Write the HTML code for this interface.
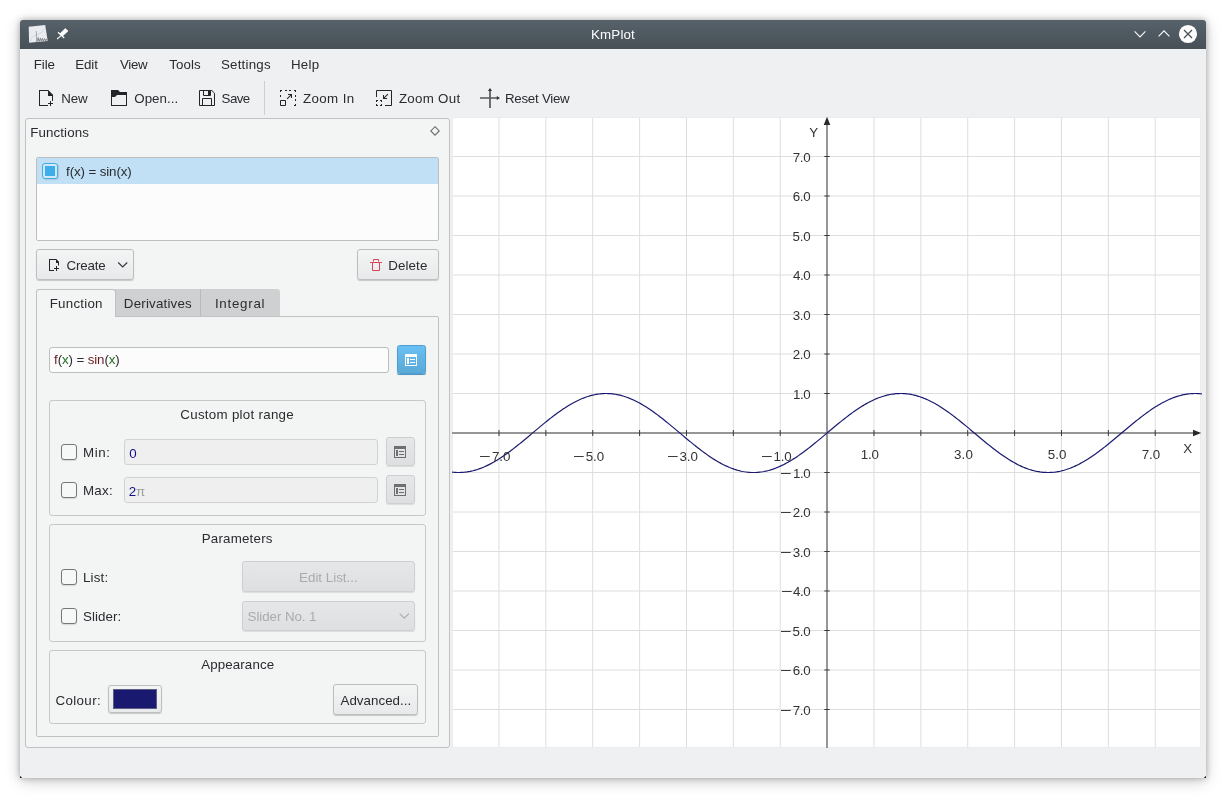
<!DOCTYPE html>
<html lang="en">
<head>
<meta charset="utf-8">
<title>KmPlot</title>
<style>
html,body{margin:0;padding:0;background:#fff;}
body{position:relative;width:1226px;height:798px;overflow:hidden;font-family:"Liberation Sans",sans-serif;font-size:13.33px;color:#31363b;}
div,span,svg{position:absolute;box-sizing:border-box;}
.t{line-height:16px;white-space:pre;font-size:13.33px;}
.t b{font-weight:normal;}
.t .r{color:#6b1a22;}
.t .g{color:#1c6e1c;}
.t .mn{font-style:normal;display:inline-block;position:absolute;right:100%;top:0;margin-right:0.8px;transform:scaleX(1.5);transform-origin:100% 50%;letter-spacing:0;}
.win{left:20px;top:20px;width:1186px;height:758px;background:#eff0f1;border-radius:3px 3px 0 0;box-shadow:0 0 6px rgba(0,0,0,.28),0 3px 16px rgba(0,0,0,.2);}
.title{left:20px;top:20px;width:1186px;height:29px;border-radius:3px 3px 0 0;background:linear-gradient(#566169,#475057);}
.sep{left:264px;top:81px;width:1px;height:34px;background:#cdd0d2;}
.dock{left:25px;top:118px;width:425px;height:630px;border:1px solid #bfc1c3;border-radius:3px;background:#f3f4f4;}
.list{left:36px;top:157px;width:403px;height:84px;border:1px solid #bcbec0;border-radius:2px;background:#fcfcfc;}
.sel{left:37px;top:158px;width:401px;height:26px;background:#c2e0f5;}
.cbon{left:42px;top:163px;width:16px;height:16px;border:1px solid #3daee9;border-radius:3px;background:#d4e8f7;box-shadow:1px 1px 1px rgba(0,0,0,.12);}
.cbon i{position:absolute;left:2px;top:2px;width:10px;height:10px;background:#3daee9;}
.btn{border:1px solid #bcbec0;border-radius:3px;background:linear-gradient(#f3f4f4,#e8e9ea);box-shadow:0 1px 1px rgba(0,0,0,.18);}
.btn.dis{border-color:#cdcfd0;background:linear-gradient(#e6e7e8,#dedfe0);box-shadow:0 1px 1px rgba(0,0,0,.10);}
.btn.blue{border-color:#4d9fd1;border-radius:2.5px;background:linear-gradient(#68c0f2,#5aa9d7);box-shadow:0 1px 0 #4f98c6,0 1px 1px rgba(0,0,0,.2);}
.tabs{left:115px;top:289px;width:165px;height:28px;background:#cfd0d1;border-radius:0 3px 0 0;}
.tabdiv{left:200px;top:289px;width:1px;height:27px;background:#b9babb;}
.pane{left:36px;top:316px;width:403px;height:421px;border:1px solid #bfc1c3;border-radius:0 2px 2px 2px;}
.tabact{left:36px;top:289px;width:80px;height:28px;border:1px solid #bfc1c3;border-bottom:none;border-radius:3px 3px 0 0;background:#f3f4f4;}
.edit{border:1px solid #bcbec0;border-radius:3px;background:#fcfcfc;}
.edit.dis{border-color:#d0d2d3;background:#efefef;}
.grp{left:49px;width:377px;border:1px solid #c6c8c9;border-radius:3px;}
.cb{width:16px;height:16px;border:1px solid #75787a;border-radius:3px;background:#f6f7f7;box-shadow:0 1px 1px rgba(0,0,0,.12);}
.plot{left:452px;top:117px;}
.ico{overflow:visible;}
</style>
</head>
<body>
<div class="win"></div>
<div class="title"></div>
<!-- title bar icons -->
<svg class="ico" style="left:20px;top:20px" width="60" height="29" viewBox="20 20 60 29">
<path d="M28.7 26.7 L45.2 25.1 L47.7 41 L29.1 42.8Z" fill="#e9ebee"/>
<path d="M30 41.5 C31 36.5 36 35.5 38 34.5 S43.5 31.5 44.5 28.5" fill="none" stroke="#c0d3ec" stroke-width="0.75"/>
<path d="M36.3 31 L36.7 43.4" stroke="#66696d" stroke-width="0.5" fill="none"/>
<path d="M37 41.8 l1.200-4.200 l1 3.800 l1.200-3.200 l1 3 l1-2.800 l1 2.600 l1.200-2.400 l0.800 2.200 l1-1.600 l0.600 1.600" fill="none" stroke="#74777b" stroke-width="0.85"/>
<path d="M59.6 33.7 L64.9 28.4 Q65.3 28 65.7 28.400 L67.900 30.600 Q68.300 31 67.900 31.400 L62.400 36.500Z" fill="#fcfcfc"/>
<path d="M58 32.3 L64.2 37.9" stroke="#fcfcfc" stroke-width="1.3"/>
<path d="M61 35.6 L57.1 39" stroke="#fcfcfc" stroke-width="1.1"/>
</svg>
<svg class="ico" style="left:1126px;top:20px" width="80" height="29" viewBox="1126 20 80 29">
<path d="M1134.6 31.4 L1140 36.9 L1145.4 31.4" fill="none" stroke="#fcfcfc" stroke-width="1.1"/>
<path d="M1158.6 36.4 L1164 30.9 L1169.4 36.4" fill="none" stroke="#fcfcfc" stroke-width="1.1"/>
<circle cx="1188" cy="34" r="9.1" fill="#fcfcfc"/>
<path d="M1184 30 L1192 38 M1192 30 L1184 38" stroke="#475057" stroke-width="1.2"/>
</svg>
<svg class="ico" style="left:20px;top:774px" width="1186" height="4" viewBox="20 774 1186 4"><path d="M20 775.800V778H22.200z" fill="#1d1f21"/><path d="M1206 775.800V778H1203.800z" fill="#1d1f21"/></svg>
<div class="sep"></div>
<!-- toolbar icons (22px) -->
<svg class="ico" style="left:34px;top:87px" width="22" height="22" viewBox="0 0 22 22" fill="#232629">
<path d="M5 3v16h9v-1H6V4h8v5h4v5h1V8l-5-5z"/><path d="M14 3v5h5z"/><path d="M16 14h1v2h2v1h-2v2h-1v-2h-2v-1h2z"/>
</svg>
<svg class="ico" style="left:108px;top:87px" width="22" height="22" viewBox="0 0 22 22" fill="#232629">
<path fill-rule="evenodd" d="M3 3h7l2 2h7v14H3zM4 10v8h14V8H9l-2 2z"/>
</svg>
<svg class="ico" style="left:196px;top:87px" width="22" height="22" viewBox="0 0 22 22" fill="none" stroke="#232629">
<path d="M3.5 3.5H15.8L18.5 6.2V18.5H3.5z"/><path d="M7.5 3.5v5h7v-5"/><path d="M6.5 18.5v-7h9v7"/><rect x="12" y="4" width="2" height="4" fill="#232629" stroke="none"/>
</svg>
<svg class="ico" style="left:277px;top:87px" width="22" height="22" viewBox="0 0 22 22" fill="#232629">
<path d="M3 3h2v1H4v1H3zM8 3h2v1H8zM12 3h2v1h-2zM17 3h2v2h-1V4h-1zM3 8h1v2H3zM18 8h1v2h-1zM18 12h1v2h-1zM18 17h1v2h-2v-1h1z"/>
<path d="M3.5 13.5h5v5h-5z" fill="none" stroke="#232629"/>
<path d="M11 7h4v4h-1V8.7l-3.6 3.6-.7-.7L13.300 8H11z"/>
</svg>
<svg class="ico" style="left:373px;top:87px" width="22" height="22" viewBox="0 0 22 22" fill="#232629">
<path d="M3.5 10V3.500H18.500V18.500H12" fill="none" stroke="#232629"/>
<path d="M3 13h2v1H4v1H3zM7 13h2v2H8v-1H7zM3 17h1v1h1v1H3zM8 17h1v2H7v-1h1z"/>
<path d="M10 8h1v2.300l3.600-3.600.7.700L11.700 11H14v1h-4z"/>
</svg>
<svg class="ico" style="left:478px;top:87px" width="22" height="22" viewBox="478 87 22 22">
<path d="M480 98H498" stroke="#555759" stroke-width="1.5"/><path d="M490 89.500V108" stroke="#555759" stroke-width="1.7"/>
<path d="M490 88l2.100 3h-4.200z" fill="#333"/><path d="M500 98l-3.200-2v4z" fill="#333"/>
</svg>
<!-- dock -->
<div class="dock"></div>
<svg class="ico" style="left:430px;top:126px" width="11" height="11" viewBox="0 0 11 11"><path d="M5 0.700L9.200 4.900 5 9.100 0.800 4.900z" fill="none" stroke="#6a6c6e" stroke-width="1.1"/></svg>
<div class="list"></div><div class="sel"></div><div class="cbon"><i></i></div>
<div class="btn" style="left:36px;top:249px;width:98px;height:31px"></div>
<svg class="ico" style="left:46px;top:257px" width="16" height="16" viewBox="0 0 16 16" fill="#232629">
<path d="M3 2v12h5v-1H4V3h6v3h2v2.500h1V5l-3-3z"/><path d="M10 2v3h3z"/><path d="M10 9h1v2h2v1h-2v2h-1v-2H8v-1h2z"/>
</svg>
<svg class="ico" style="left:117px;top:261px" width="12" height="8" viewBox="117 261 12 8"><path d="M118.200 262.500L122.700 267l4.500-4.500" fill="none" stroke="#31363b" stroke-width="1.1"/></svg>
<div class="btn" style="left:357px;top:249px;width:82px;height:31px"></div>
<svg class="ico" style="left:368px;top:257px" width="16" height="16" viewBox="0 0 16 16" fill="none" stroke="#da4453">
<path d="M5.500 4.500v-2h5v2"/><path d="M2 5.500h12"/><path d="M4.500 5.500v8h7v-8"/>
</svg>
<div class="tabs"></div><div class="tabdiv"></div>
<div class="pane"></div><div class="tabact"></div>
<div class="edit" style="left:49px;top:347px;width:340px;height:26px"></div>
<div class="btn blue" style="left:397px;top:345px;width:29px;height:29px"></div>
<svg class="ico" style="left:405px;top:354px" width="12" height="12" viewBox="0 0 12 12" fill="#fcfcfc">
<path fill-rule="evenodd" d="M0 0h12v12H0zM1 3v8h10V3z"/><path d="M2 4h2v6H2zM5 5h5v1H5zM5 8h5v1H5z"/>
</svg>
<div class="grp" style="top:400px;height:116px"></div>
<div class="cb" style="left:61px;top:444px"></div>
<div class="edit dis" style="left:124px;top:439px;width:254px;height:26px"></div>
<div class="btn dis" style="left:386px;top:437px;width:29px;height:29px"></div>
<svg class="ico" style="left:394px;top:446px" width="12" height="12" viewBox="0 0 12 12" fill="#6d7072">
<path fill-rule="evenodd" d="M0 0h12v12H0zM1 3v8h10V3z"/><path d="M2 4h2v6H2zM5 5h5v1H5zM5 8h5v1H5z"/>
</svg>
<div class="cb" style="left:61px;top:482px"></div>
<div class="edit dis" style="left:124px;top:477px;width:254px;height:26px"></div>
<div class="btn dis" style="left:386px;top:475px;width:29px;height:29px"></div>
<svg class="ico" style="left:394px;top:484px" width="12" height="12" viewBox="0 0 12 12" fill="#6d7072">
<path fill-rule="evenodd" d="M0 0h12v12H0zM1 3v8h10V3z"/><path d="M2 4h2v6H2zM5 5h5v1H5zM5 8h5v1H5z"/>
</svg>
<div class="grp" style="top:524px;height:118px"></div>
<div class="cb" style="left:61px;top:569px"></div>
<div class="btn dis" style="left:242px;top:561px;width:173px;height:31px"></div>
<div class="cb" style="left:61px;top:608px"></div>
<div class="btn dis" style="left:242px;top:601px;width:173px;height:30px"></div>
<svg class="ico" style="left:398px;top:612px" width="12" height="8" viewBox="398 612 12 8"><path d="M399.700 613.700L404.300 618.200l4.600-4.500" fill="none" stroke="#a9abad" stroke-width="1.1"/></svg>
<div class="grp" style="top:650px;height:74px"></div>
<div class="btn" style="left:108px;top:685px;width:54px;height:28px"></div>
<div style="left:113px;top:689px;width:44px;height:20px;background:#191970;border:1px solid #5c5c86"></div>
<div class="btn" style="left:333px;top:684px;width:85px;height:31px"></div>
<svg class="plot" width="751" height="631" viewBox="452 117 751 631"><rect x="452" y="117" width="749" height="631" fill="#fff"/><g stroke="#dedede" stroke-width="1"><line x1="452.10" y1="117" x2="452.10" y2="748"/><line x1="498.98" y1="117" x2="498.98" y2="748"/><line x1="545.85" y1="117" x2="545.85" y2="748"/><line x1="592.73" y1="117" x2="592.73" y2="748"/><line x1="639.60" y1="117" x2="639.60" y2="748"/><line x1="686.48" y1="117" x2="686.48" y2="748"/><line x1="733.35" y1="117" x2="733.35" y2="748"/><line x1="780.23" y1="117" x2="780.23" y2="748"/><line x1="873.98" y1="117" x2="873.98" y2="748"/><line x1="920.85" y1="117" x2="920.85" y2="748"/><line x1="967.73" y1="117" x2="967.73" y2="748"/><line x1="1014.60" y1="117" x2="1014.60" y2="748"/><line x1="1061.47" y1="117" x2="1061.47" y2="748"/><line x1="1108.35" y1="117" x2="1108.35" y2="748"/><line x1="1155.22" y1="117" x2="1155.22" y2="748"/><line x1="452" y1="709.50" x2="1201" y2="709.50"/><line x1="452" y1="670.00" x2="1201" y2="670.00"/><line x1="452" y1="630.50" x2="1201" y2="630.50"/><line x1="452" y1="591.00" x2="1201" y2="591.00"/><line x1="452" y1="551.50" x2="1201" y2="551.50"/><line x1="452" y1="512.00" x2="1201" y2="512.00"/><line x1="452" y1="472.50" x2="1201" y2="472.50"/><line x1="452" y1="393.50" x2="1201" y2="393.50"/><line x1="452" y1="354.00" x2="1201" y2="354.00"/><line x1="452" y1="314.50" x2="1201" y2="314.50"/><line x1="452" y1="275.00" x2="1201" y2="275.00"/><line x1="452" y1="235.50" x2="1201" y2="235.50"/><line x1="452" y1="196.00" x2="1201" y2="196.00"/><line x1="452" y1="156.50" x2="1201" y2="156.50"/></g><rect x="452.5" y="117.5" width="748" height="630" fill="none" stroke="#ececec"/><rect x="826" y="122" width="2" height="626" fill="#969696"/><rect x="452" y="432" width="744" height="2" fill="#969696"/><g stroke="#3a3a3a" stroke-width="1"><line x1="498.98" y1="430" x2="498.98" y2="436"/><line x1="824.3" y1="709.50" x2="829.7" y2="709.50"/><line x1="545.85" y1="430" x2="545.85" y2="436"/><line x1="824.3" y1="670.00" x2="829.7" y2="670.00"/><line x1="592.73" y1="430" x2="592.73" y2="436"/><line x1="824.3" y1="630.50" x2="829.7" y2="630.50"/><line x1="639.60" y1="430" x2="639.60" y2="436"/><line x1="824.3" y1="591.00" x2="829.7" y2="591.00"/><line x1="686.48" y1="430" x2="686.48" y2="436"/><line x1="824.3" y1="551.50" x2="829.7" y2="551.50"/><line x1="733.35" y1="430" x2="733.35" y2="436"/><line x1="824.3" y1="512.00" x2="829.7" y2="512.00"/><line x1="780.23" y1="430" x2="780.23" y2="436"/><line x1="824.3" y1="472.50" x2="829.7" y2="472.50"/><line x1="873.98" y1="430" x2="873.98" y2="436"/><line x1="824.3" y1="393.50" x2="829.7" y2="393.50"/><line x1="920.85" y1="430" x2="920.85" y2="436"/><line x1="824.3" y1="354.00" x2="829.7" y2="354.00"/><line x1="967.73" y1="430" x2="967.73" y2="436"/><line x1="824.3" y1="314.50" x2="829.7" y2="314.50"/><line x1="1014.60" y1="430" x2="1014.60" y2="436"/><line x1="824.3" y1="275.00" x2="829.7" y2="275.00"/><line x1="1061.47" y1="430" x2="1061.47" y2="436"/><line x1="824.3" y1="235.50" x2="829.7" y2="235.50"/><line x1="1108.35" y1="430" x2="1108.35" y2="436"/><line x1="824.3" y1="196.00" x2="829.7" y2="196.00"/><line x1="1155.22" y1="430" x2="1155.22" y2="436"/><line x1="824.3" y1="156.50" x2="829.7" y2="156.50"/></g><path d="M827 116.8 L830.3 125 H823.7Z" fill="#2a2a2a"/><path d="M1201.2 433 L1193 429.8 V436.2Z" fill="#2a2a2a"/><polyline fill="none" stroke="#191970" stroke-width="1.2" stroke-linejoin="round" points="452.0,472.07 453.5,472.23 455.0,472.36 456.5,472.45 458.0,472.49 459.5,472.50 461.0,472.46 462.5,472.39 464.0,472.27 465.5,472.11 467.0,471.92 468.5,471.68 470.0,471.41 471.5,471.09 473.0,470.74 474.5,470.34 476.0,469.91 477.5,469.45 479.0,468.94 480.5,468.40 482.0,467.82 483.5,467.20 485.0,466.55 486.5,465.87 488.0,465.15 489.5,464.40 491.0,463.62 492.5,462.80 494.0,461.96 495.5,461.09 497.0,460.18 498.5,459.25 500.0,458.29 501.5,457.31 503.0,456.30 504.5,455.27 506.0,454.21 507.5,453.14 509.0,452.04 510.5,450.92 512.0,449.79 513.5,448.63 515.0,447.47 516.5,446.28 518.0,445.09 519.5,443.88 521.0,442.66 522.5,441.43 524.0,440.19 525.5,438.94 527.0,437.69 528.5,436.43 530.0,435.17 531.5,433.91 533.0,432.64 534.5,431.38 536.0,430.12 537.5,428.86 539.0,427.60 540.5,426.35 542.0,425.11 543.5,423.88 545.0,422.65 546.5,421.44 548.0,420.24 549.5,419.05 551.0,417.87 552.5,416.71 554.0,415.57 555.5,414.44 557.0,413.34 558.5,412.25 560.0,411.19 561.5,410.14 563.0,409.12 564.5,408.13 566.0,407.16 567.5,406.22 569.0,405.30 570.5,404.42 572.0,403.56 573.5,402.73 575.0,401.93 576.5,401.17 578.0,400.44 579.5,399.74 581.0,399.07 582.5,398.44 584.0,397.85 585.5,397.29 587.0,396.77 588.5,396.28 590.0,395.84 591.5,395.43 593.0,395.06 594.5,394.73 596.0,394.43 597.5,394.18 599.0,393.97 600.5,393.79 602.0,393.66 603.5,393.57 605.0,393.51 606.5,393.50 608.0,393.53 609.5,393.60 611.0,393.71 612.5,393.86 614.0,394.04 615.5,394.27 617.0,394.54 618.5,394.85 620.0,395.20 621.5,395.58 623.0,396.01 624.5,396.47 626.0,396.97 627.5,397.51 629.0,398.08 630.5,398.69 632.0,399.33 633.5,400.01 635.0,400.72 636.5,401.47 638.0,402.24 639.5,403.05 641.0,403.89 642.5,404.76 644.0,405.66 645.5,406.58 647.0,407.54 648.5,408.52 650.0,409.52 651.5,410.55 653.0,411.60 654.5,412.67 656.0,413.77 657.5,414.88 659.0,416.01 660.5,417.16 662.0,418.33 663.5,419.51 665.0,420.70 666.5,421.91 668.0,423.13 669.5,424.36 671.0,425.60 672.5,426.84 674.0,428.09 675.5,429.35 677.0,430.61 678.5,431.87 680.0,433.14 681.5,434.40 683.0,435.66 684.5,436.92 686.0,438.18 687.5,439.43 689.0,440.67 690.5,441.91 692.0,443.13 693.5,444.35 695.0,445.56 696.5,446.75 698.0,447.92 699.5,449.09 701.0,450.23 702.5,451.36 704.0,452.47 705.5,453.56 707.0,454.63 708.5,455.68 710.0,456.70 711.5,457.70 713.0,458.67 714.5,459.62 716.0,460.54 717.5,461.43 719.0,462.29 720.5,463.13 722.0,463.93 723.5,464.70 725.0,465.44 726.5,466.14 728.0,466.81 729.5,467.45 731.0,468.05 732.5,468.61 734.0,469.14 735.5,469.63 737.0,470.09 738.5,470.50 740.0,470.88 741.5,471.22 743.0,471.52 744.5,471.78 746.0,472.00 747.5,472.18 749.0,472.32 750.5,472.42 752.0,472.48 753.5,472.50 755.0,472.48 756.5,472.42 758.0,472.32 759.5,472.17 761.0,471.99 762.5,471.77 764.0,471.51 765.5,471.21 767.0,470.87 768.5,470.49 770.0,470.07 771.5,469.61 773.0,469.12 774.5,468.59 776.0,468.02 777.5,467.42 779.0,466.78 780.5,466.11 782.0,465.41 783.5,464.67 785.0,463.90 786.5,463.09 788.0,462.26 789.5,461.39 791.0,460.50 792.5,459.58 794.0,458.63 795.5,457.66 797.0,456.66 798.5,455.63 800.0,454.59 801.5,453.52 803.0,452.43 804.5,451.31 806.0,450.19 807.5,449.04 809.0,447.88 810.5,446.70 812.0,445.51 813.5,444.30 815.0,443.08 816.5,441.86 818.0,440.62 819.5,439.38 821.0,438.13 822.5,436.87 824.0,435.61 825.5,434.35 827.0,433.08 828.5,431.82 830.0,430.56 831.5,429.30 833.0,428.04 834.5,426.79 836.0,425.55 837.5,424.31 839.0,423.08 840.5,421.86 842.0,420.65 843.5,419.46 845.0,418.28 846.5,417.11 848.0,415.97 849.5,414.83 851.0,413.72 852.5,412.63 854.0,411.56 855.5,410.51 857.0,409.48 858.5,408.48 860.0,407.50 861.5,406.55 863.0,405.62 864.5,404.72 866.0,403.86 867.5,403.02 869.0,402.21 870.5,401.43 872.0,400.69 873.5,399.98 875.0,399.30 876.5,398.66 878.0,398.05 879.5,397.48 881.0,396.95 882.5,396.45 884.0,395.99 885.5,395.57 887.0,395.18 888.5,394.84 890.0,394.53 891.5,394.26 893.0,394.04 894.5,393.85 896.0,393.70 897.5,393.59 899.0,393.53 900.5,393.50 902.0,393.51 903.5,393.57 905.0,393.66 906.5,393.80 908.0,393.97 909.5,394.19 911.0,394.44 912.5,394.74 914.0,395.07 915.5,395.44 917.0,395.86 918.5,396.30 920.0,396.79 921.5,397.31 923.0,397.87 924.5,398.47 926.0,399.10 927.5,399.77 929.0,400.47 930.5,401.20 932.0,401.97 933.5,402.77 935.0,403.59 936.5,404.45 938.0,405.34 939.5,406.26 941.0,407.20 942.5,408.17 944.0,409.17 945.5,410.19 947.0,411.23 948.5,412.30 950.0,413.38 951.5,414.49 953.0,415.62 954.5,416.76 956.0,417.92 957.5,419.10 959.0,420.29 960.5,421.49 962.0,422.70 963.5,423.93 965.0,425.16 966.5,426.41 968.0,427.66 969.5,428.91 971.0,430.17 972.5,431.43 974.0,432.69 975.5,433.96 977.0,435.22 978.5,436.48 980.0,437.74 981.5,438.99 983.0,440.24 984.5,441.48 986.0,442.71 987.5,443.93 989.0,445.14 990.5,446.33 992.0,447.51 993.5,448.68 995.0,449.83 996.5,450.97 998.0,452.09 999.5,453.18 1001.0,454.26 1002.5,455.31 1004.0,456.34 1005.5,457.35 1007.0,458.33 1008.5,459.29 1010.0,460.22 1011.5,461.12 1013.0,462.00 1014.5,462.84 1016.0,463.65 1017.5,464.43 1019.0,465.18 1020.5,465.90 1022.0,466.58 1023.5,467.23 1025.0,467.84 1026.5,468.42 1028.0,468.96 1029.5,469.47 1031.0,469.93 1032.5,470.36 1034.0,470.75 1035.5,471.11 1037.0,471.42 1038.5,471.69 1040.0,471.93 1041.5,472.12 1043.0,472.28 1044.5,472.39 1046.0,472.46 1047.5,472.50 1049.0,472.49 1050.5,472.44 1052.0,472.36 1053.5,472.23 1055.0,472.06 1056.5,471.85 1058.0,471.60 1059.5,471.32 1061.0,470.99 1062.5,470.62 1064.0,470.22 1065.5,469.78 1067.0,469.30 1068.5,468.78 1070.0,468.23 1071.5,467.64 1073.0,467.01 1074.5,466.35 1076.0,465.66 1077.5,464.93 1079.0,464.17 1080.5,463.38 1082.0,462.55 1083.5,461.70 1085.0,460.82 1086.5,459.91 1088.0,458.97 1089.5,458.00 1091.0,457.01 1092.5,455.99 1094.0,454.95 1095.5,453.89 1097.0,452.81 1098.5,451.71 1100.0,450.58 1101.5,449.44 1103.0,448.28 1104.5,447.11 1106.0,445.92 1107.5,444.72 1109.0,443.51 1110.5,442.29 1112.0,441.05 1113.5,439.81 1115.0,438.56 1116.5,437.31 1118.0,436.05 1119.5,434.79 1121.0,433.53 1122.5,432.26 1124.0,431.00 1125.5,429.74 1127.0,428.48 1128.5,427.23 1130.0,425.98 1131.5,424.74 1133.0,423.51 1134.5,422.29 1136.0,421.08 1137.5,419.88 1139.0,418.69 1140.5,417.52 1142.0,416.37 1143.5,415.23 1145.0,414.11 1146.5,413.01 1148.0,411.93 1149.5,410.87 1151.0,409.83 1152.5,408.82 1154.0,407.84 1155.5,406.87 1157.0,405.94 1158.5,405.03 1160.0,404.16 1161.5,403.31 1163.0,402.49 1164.5,401.70 1166.0,400.95 1167.5,400.22 1169.0,399.54 1170.5,398.88 1172.0,398.26 1173.5,397.68 1175.0,397.13 1176.5,396.62 1178.0,396.15 1179.5,395.71 1181.0,395.31 1182.5,394.95 1184.0,394.63 1185.5,394.35 1187.0,394.11 1188.5,393.91 1190.0,393.75 1191.5,393.63 1193.0,393.55 1194.5,393.51 1196.0,393.50 1197.5,393.55 1199.0,393.63 1200.5,393.75 1202.0,393.91"/></svg>
<div class="tl" style="left:0;top:0;width:1226px;height:798px;will-change:transform"><span class="t" style="left:591.07px;top:27px;color:#fcfcfc;letter-spacing:0.148px">KmPlot</span>
<span class="t" style="left:33.76px;top:57px;color:#292c30;letter-spacing:-0.081px">File</span>
<span class="t" style="left:75.17px;top:57px;color:#292c30;letter-spacing:-0.047px">Edit</span>
<span class="t" style="left:119.97px;top:57px;color:#292c30;letter-spacing:-0.297px">View</span>
<span class="t" style="left:169.15px;top:57px;color:#292c30;letter-spacing:0.102px">Tools</span>
<span class="t" style="left:220.93px;top:57px;color:#292c30;letter-spacing:0.217px">Settings</span>
<span class="t" style="left:290.95px;top:57px;color:#292c30;letter-spacing:0.293px">Help</span>
<span class="t" style="left:61.23px;top:91px;color:#292c30;letter-spacing:-0.146px">New</span>
<span class="t" style="left:134.27px;top:91px;color:#292c30;letter-spacing:0.030px">Open...</span>
<span class="t" style="left:221.61px;top:91px;color:#292c30;letter-spacing:-0.609px">Save</span>
<span class="t" style="left:302.95px;top:91px;color:#292c30;letter-spacing:0.387px">Zoom In</span>
<span class="t" style="left:398.95px;top:91px;color:#292c30;letter-spacing:0.278px">Zoom Out</span>
<span class="t" style="left:504.95px;top:91px;color:#292c30;letter-spacing:-0.262px">Reset View</span>
<span class="t" style="left:30.18px;top:125px;color:#292c30;letter-spacing:0.119px">Functions</span>
<span class="t" style="left:66.05px;top:164px;color:#292c30;letter-spacing:-0.110px">f(x) = sin(x)</span>
<span class="t" style="left:66.45px;top:258px;color:#292c30;letter-spacing:-0.151px">Create</span>
<span class="t" style="left:388.17px;top:258px;color:#292c30;letter-spacing:0.138px">Delete</span>
<span class="t" style="left:49.76px;top:296px;color:#292c30;letter-spacing:0.233px">Function</span>
<span class="t" style="left:123.84px;top:296px;color:#292c30;letter-spacing:0.201px">Derivatives</span>
<span class="t" style="left:214.88px;top:296px;color:#292c30;letter-spacing:0.750px">Integral</span>
<span class="t" style="left:54.12px;top:352px;color:#292c30;letter-spacing:-0.125px"><b class="r">f</b>(<b class="g">x</b>) = <b class="r">sin</b>(<b class="g">x</b>)</span>
<span class="t" style="left:180.29px;top:407px;color:#292c30;letter-spacing:0.283px">Custom plot range</span>
<span class="t" style="left:82.95px;top:445px;color:#292c30;letter-spacing:0.606px">Min:</span>
<span class="t" style="left:129.28px;top:446px;color:#10108a">0</span>
<span class="t" style="left:82.95px;top:483px;color:#292c30;letter-spacing:0.322px">Max:</span>
<span class="t" style="left:128.84px;top:484px;color:#10108a;letter-spacing:-0.278px">2<b style="color:#9b9d9f">π</b></span>
<span class="t" style="left:201.76px;top:531px;color:#292c30;letter-spacing:0.200px">Parameters</span>
<span class="t" style="left:82.95px;top:570px;color:#292c30;letter-spacing:0.196px">List:</span>
<span class="t" style="left:299.07px;top:570px;color:#a9abad;letter-spacing:0.006px">Edit List...</span>
<span class="t" style="left:82.99px;top:609px;color:#292c30;letter-spacing:0.090px">Slider:</span>
<span class="t" style="left:247.61px;top:609px;color:#a9abad;letter-spacing:-0.065px">Slider No. 1</span>
<span class="t" style="left:201.31px;top:657px;color:#292c30;letter-spacing:0.099px">Appearance</span>
<span class="t" style="left:55.59px;top:693px;color:#292c30;letter-spacing:0.345px">Colour:</span>
<span class="t" style="left:340.51px;top:693px;color:#292c30;letter-spacing:0.033px">Advanced...</span>
<span class="t" style="left:1183.26px;top:441px;color:#333333">X</span>
<span class="t" style="left:809.30px;top:125px;color:#333333">Y</span>
<span class="t" style="left:792.79px;top:703px;color:#333333;letter-spacing:-0.329px"><i class="mn">−</i>7.0</span>
<span class="t" style="left:792.75px;top:663px;color:#333333;letter-spacing:-0.311px"><i class="mn">−</i>6.0</span>
<span class="t" style="left:792.53px;top:624px;color:#333333;letter-spacing:-0.198px"><i class="mn">−</i>5.0</span>
<span class="t" style="left:793.10px;top:584px;color:#333333;letter-spacing:-0.482px"><i class="mn">−</i>4.0</span>
<span class="t" style="left:792.64px;top:545px;color:#333333;letter-spacing:-0.253px"><i class="mn">−</i>3.0</span>
<span class="t" style="left:792.79px;top:505px;color:#333333;letter-spacing:-0.329px"><i class="mn">−</i>2.0</span>
<span class="t" style="left:793.01px;top:466px;color:#333333;letter-spacing:-0.392px"><i class="mn">−</i>1.0</span>
<span class="t" style="left:793.01px;top:387px;color:#333333;letter-spacing:-0.392px">1.0</span>
<span class="t" style="left:792.79px;top:347px;color:#333333;letter-spacing:-0.329px">2.0</span>
<span class="t" style="left:792.64px;top:308px;color:#333333;letter-spacing:-0.253px">3.0</span>
<span class="t" style="left:793.10px;top:268px;color:#333333;letter-spacing:-0.482px">4.0</span>
<span class="t" style="left:792.53px;top:229px;color:#333333;letter-spacing:-0.198px">5.0</span>
<span class="t" style="left:792.75px;top:189px;color:#333333;letter-spacing:-0.311px">6.0</span>
<span class="t" style="left:792.79px;top:150px;color:#333333;letter-spacing:-0.329px">7.0</span>
<span class="t" style="left:491.94px;top:449px;color:#333333;letter-spacing:-0.083px"><i class="mn">−</i>7.0</span>
<span class="t" style="left:585.63px;top:449px;color:#333333;letter-spacing:-0.009px"><i class="mn">−</i>5.0</span>
<span class="t" style="left:679.46px;top:449px;color:#333333;letter-spacing:0.005px"><i class="mn">−</i>3.0</span>
<span class="t" style="left:773.43px;top:449px;color:#333333;letter-spacing:-0.161px"><i class="mn">−</i>1.0</span>
<span class="t" style="left:860.86px;top:447px;color:#333333;letter-spacing:-0.238px">1.0</span>
<span class="t" style="left:953.88px;top:447px;color:#333333;letter-spacing:0.230px">3.0</span>
<span class="t" style="left:1047.69px;top:447px;color:#333333;letter-spacing:0.108px">5.0</span>
<span class="t" style="left:1141.69px;top:447px;color:#333333;letter-spacing:-0.076px">7.0</span></div>
</body>
</html>
